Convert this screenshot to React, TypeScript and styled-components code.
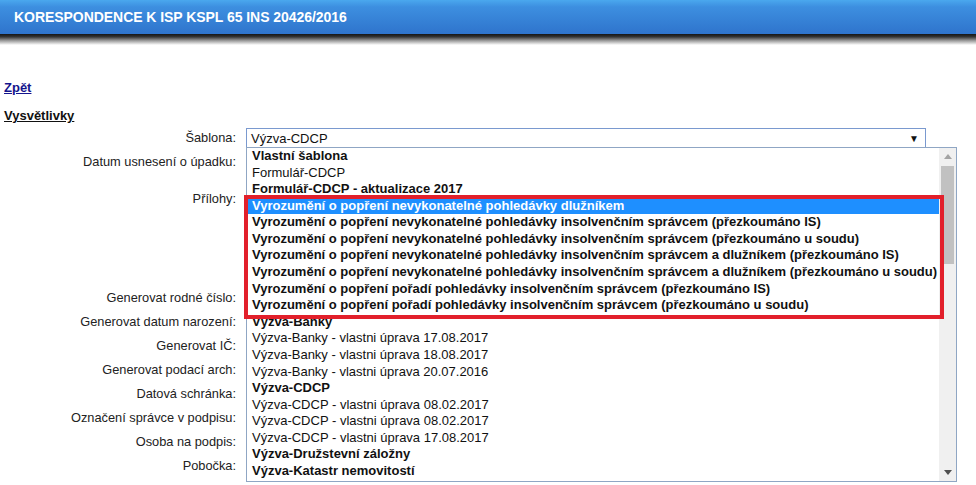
import React from "react";
import styled, { createGlobalStyle } from "styled-components";

const Global = createGlobalStyle`
  html, body { margin: 0; padding: 0; overflow: hidden; background: #fff; }
  body { font-family: "Liberation Sans", Arial, sans-serif; font-size: 13px; color: #222; }
`;

const Page = styled.div`
  position: relative;
  width: 976px;
  height: 485px;
  overflow: hidden;
`;

const Header = styled.header`
  height: 34px;
  background: linear-gradient(to bottom, #4aa8ee 0%, #3d8fe0 20%, #2f74cc 100%);
  display: flex;
  align-items: center;
  padding-left: 14px;
`;

const HeaderTitle = styled.h1`
  margin: 0;
  font-size: 14px;
  font-weight: bold;
  color: #fff;
  letter-spacing: -0.05px;
  padding-bottom: 1px;
`;

const HeaderShadow = styled.div`
  height: 11px;
  background: linear-gradient(to bottom, #151515 0%, #333 25%, #9a9a9a 60%, #fff 100%);
`;

const Content = styled.main`
  padding: 0 4px;
`;

const BackLink = styled.a`
  display: inline-block;
  margin-top: 35px;
  font-weight: bold;
  color: #14148c;
  text-decoration: underline;
  line-height: 16px;
`;

const SectionTitle = styled.div`
  margin-top: 12px;
  font-weight: bold;
  text-decoration: underline;
  color: #111;
  line-height: 16px;
`;

const Form = styled.div`
  display: flex;
  flex-direction: column;
  margin-top: 2px;
`;

const Row = styled.div<{ $h: number }>`
  display: grid;
  grid-template-columns: 232px 1fr;
  column-gap: 10px;
  height: ${(p) => p.$h}px;
  align-items: start;
`;

const Label = styled.div<{ $top?: number }>`
  text-align: right;
  font-size: 12.8px;
  line-height: 24px;
  padding-top: ${(p) => p.$top ?? 0}px;
  color: #222;
  white-space: nowrap;
`;

const Field = styled.div`
  display: flex;
  align-items: center;
  height: 24px;
`;

const SelectBox = styled.div`
  box-sizing: border-box;
  width: 680px;
  height: 20px;
  border: 1px solid #7a99cf;
  display: flex;
  align-items: center;
  justify-content: space-between;
  padding: 0 6px 0 4px;
  font-size: 13px;
  color: #111;
  background: #fff;
`;

const Arrow = styled.span`
  font-size: 10px;
  color: #111;
  margin-top: 1px;
`;

const Check = styled.span`
  box-sizing: border-box;
  display: inline-block;
  width: 12px;
  height: 12px;
  margin-left: 6px;
  margin-top: 4px;
  border: 1px solid #9aa4b4;
  border-radius: 2px;
  background: #f4f4f4;
`;

const Popup = styled.div`
  position: absolute;
  left: 246px;
  top: 147px;
  width: 711px;
  height: 335px;
  box-sizing: border-box;
  border: 1px solid #8fa6c4;
  background: #fff;
  display: flex;
`;

const List = styled.ul`
  list-style: none;
  margin: 0;
  padding: 0 0 0 1px;
  flex: 1;
  min-width: 0;
  overflow: hidden;
  font-size: 13px;
  color: #111;
`;

const Option = styled.li<{ $bold?: boolean; $selected?: boolean }>`
  height: 16.58px;
  line-height: 16.58px;
  padding-left: 4px;
  white-space: nowrap;
  font-weight: ${(p) => (p.$bold ? "bold" : "normal")};
  background: ${(p) => (p.$selected ? "#1e8fff" : "transparent")};
  color: ${(p) => (p.$selected ? "#fff" : "#111")};
`;

const Scrollbar = styled.div`
  width: 17px;
  flex: none;
  background: #f0f0f0;
  display: flex;
  flex-direction: column;
  align-items: center;
`;

const ScrollBtn = styled.div`
  height: 17px;
  width: 17px;
  display: flex;
  align-items: center;
  justify-content: center;
`;

const Thumb = styled.div`
  width: 13px;
  height: 98px;
  background: #c1c1c1;
  margin-top: 1px;
`;

const Track = styled.div`
  flex: 1;
`;

const Highlight = styled.div`
  position: absolute;
  left: 244px;
  top: 195px;
  width: 700px;
  height: 124px;
  box-sizing: border-box;
  border: 4px solid #e2202b;
  pointer-events: none;
`;

type Opt = { t: string; b?: boolean; s?: boolean };

const options: Opt[] = [
  { t: "Vlastní šablona", b: true },
  { t: "Formulář-CDCP" },
  { t: "Formulář-CDCP - aktualizace 2017", b: true },
  { t: "Vyrozumění o popření nevykonatelné pohledávky dlužníkem", b: true, s: true },
  { t: "Vyrozumění o popření nevykonatelné pohledávky insolvenčním správcem (přezkoumáno IS)", b: true },
  { t: "Vyrozumění o popření nevykonatelné pohledávky insolvenčním správcem (přezkoumáno u soudu)", b: true },
  { t: "Vyrozumění o popření nevykonatelné pohledávky insolvenčním správcem a dlužníkem (přezkoumáno IS)", b: true },
  { t: "Vyrozumění o popření nevykonatelné pohledávky insolvenčním správcem a dlužníkem (přezkoumáno u soudu)", b: true },
  { t: "Vyrozumění o popření pořadí pohledávky insolvenčním správcem (přezkoumáno IS)", b: true },
  { t: "Vyrozumění o popření pořadí pohledávky insolvenčním správcem (přezkoumáno u soudu)", b: true },
  { t: "Výzva-Banky", b: true },
  { t: "Výzva-Banky - vlastni úprava 17.08.2017" },
  { t: "Výzva-Banky - vlastni úprava 18.08.2017" },
  { t: "Výzva-Banky - vlastni úprava 20.07.2016" },
  { t: "Výzva-CDCP", b: true },
  { t: "Výzva-CDCP - vlastni úprava 08.02.2017" },
  { t: "Výzva-CDCP - vlastni úprava 08.02.2017" },
  { t: "Výzva-CDCP - vlastni úprava 17.08.2017" },
  { t: "Výzva-Družstevní záložny", b: true },
  { t: "Výzva-Katastr nemovitostí", b: true },
];

const smallRows = [
  "Generovat rodné číslo:",
  "Generovat datum narození:",
  "Generovat IČ:",
  "Generovat podací arch:",
  "Datová schránka:",
  "Označení správce v podpisu:",
  "Osoba na podpis:",
  "Pobočka:",
];

export default function App() {
  return (
    <Page>
      <Global />
      <Header>
        <HeaderTitle>KORESPONDENCE K ISP KSPL 65 INS 20426/2016</HeaderTitle>
      </Header>
      <HeaderShadow />
      <Content>
        <BackLink href="#">Zpět</BackLink>
        <SectionTitle>Vysvětlivky</SectionTitle>
        <Form>
          <Row $h={24}>
            <Label>Šablona:</Label>
            <Field>
              <SelectBox>
                <span>Výzva-CDCP</span>
                <Arrow>▼</Arrow>
              </SelectBox>
            </Field>
          </Row>
          <Row $h={24}>
            <Label>Datum usnesení o úpadku:</Label>
            <Field />
          </Row>
          <Row $h={112}>
            <Label $top={13}>Přílohy:</Label>
            <Field />
          </Row>
          {smallRows.map((l) => (
            <Row $h={24} key={l}>
              <Label>{l}</Label>
              <Field />
            </Row>
          ))}
          <Row $h={24}>
            <Label />
            <Field>
              <Check />
            </Field>
          </Row>
        </Form>
      </Content>
      <Popup>
        <List>
          {options.map((o, i) => (
            <Option key={i} $bold={o.b} $selected={o.s}>
              {o.t}
            </Option>
          ))}
        </List>
        <Scrollbar>
          <ScrollBtn>
            <svg width="8" height="5" viewBox="0 0 8 5">
              <path d="M0 5 L4 0 L8 5 Z" fill="#a3a3a3" />
            </svg>
          </ScrollBtn>
          <Thumb />
          <Track />
          <ScrollBtn>
            <svg width="8" height="5" viewBox="0 0 8 5">
              <path d="M0 0 L8 0 L4 5 Z" fill="#505050" />
            </svg>
          </ScrollBtn>
        </Scrollbar>
      </Popup>
      <Highlight />
    </Page>
  );
}
